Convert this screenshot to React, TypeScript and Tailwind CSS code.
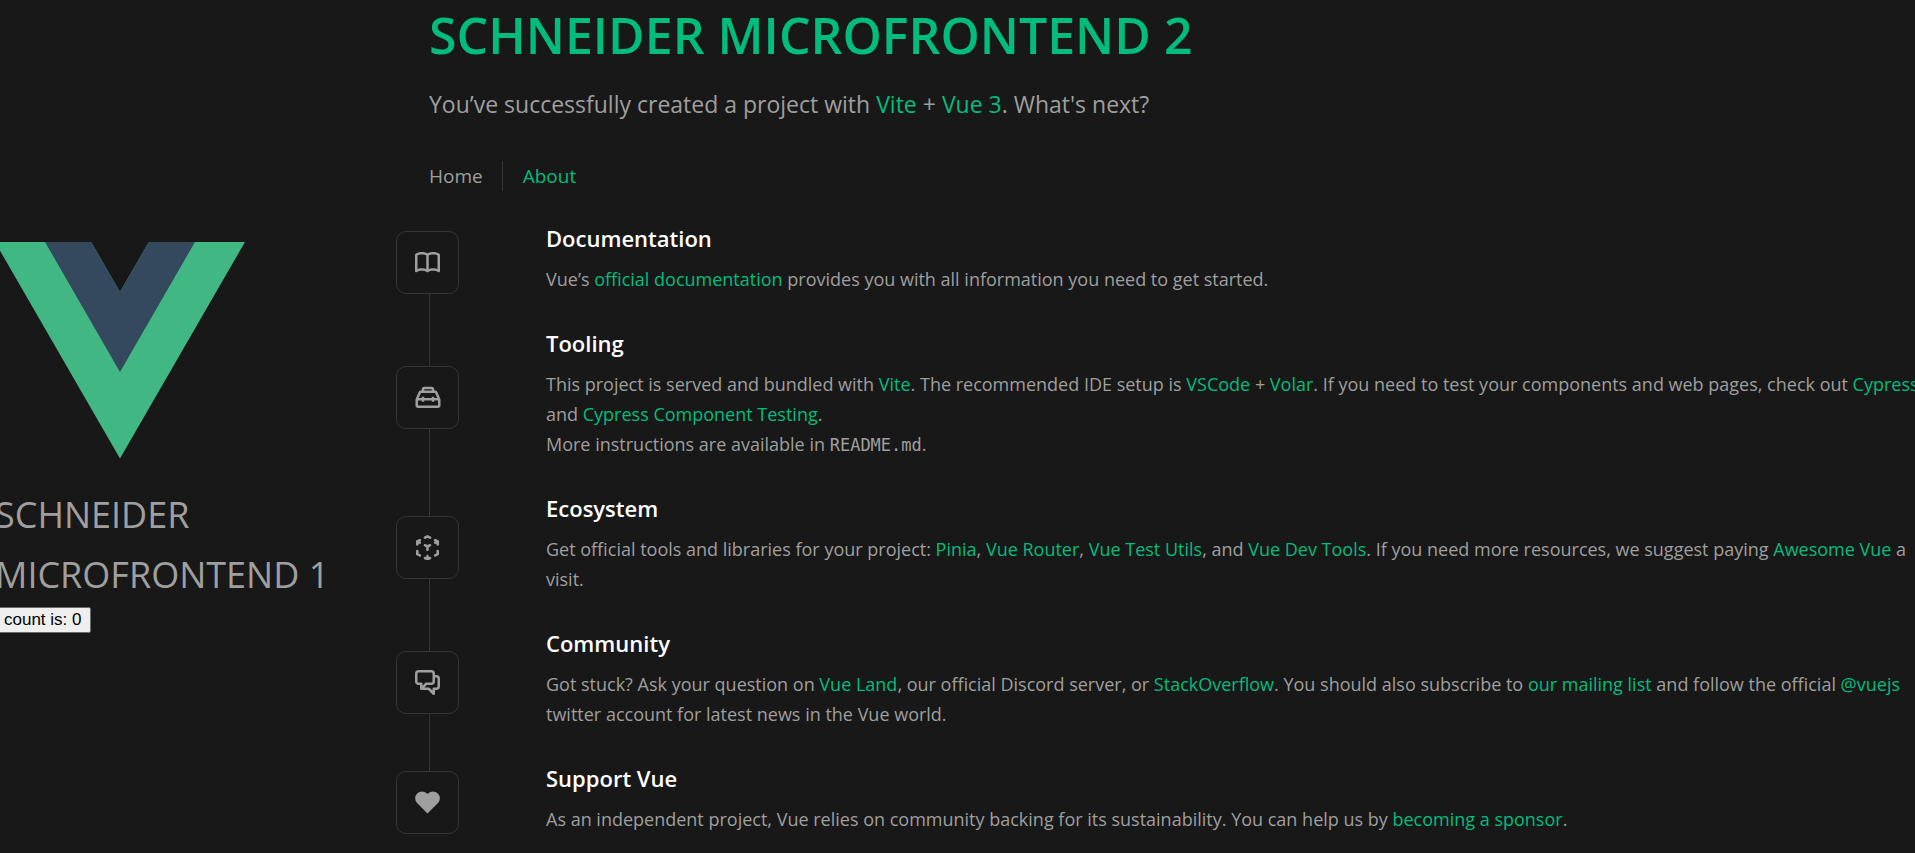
import { useState, type ReactNode } from "react";

function Link({ children }: { children: ReactNode }) {
  return (
    <a href="#" className="text-[#00bd7e] transition-colors hover:bg-[#00bd7e]/20">
      {children}
    </a>
  );
}

function VueLogo() {
  return (
    <svg viewBox="0 0 261.76 226.69" className="w-[250px]" aria-hidden="true">
      <path
        d="M161.096.001l-30.225 52.351L100.647.001H-.005l130.877 226.688L261.749.001z"
        fill="#41b883"
      />
      <path
        d="M161.096.001l-30.225 52.351L100.647.001H52.346l78.526 136.01L209.398.001z"
        fill="#34495e"
      />
    </svg>
  );
}

function DocumentationIcon() {
  return (
    <svg viewBox="0 0 20 17" className="w-[25px]" fill="currentColor" aria-hidden="true">
      <path d="M11 2.253a1 1 0 1 0-2 0h2zm-2 13a1 1 0 1 0 2 0H9zm.447-12.167a1 1 0 1 0 1.107-1.666L9.447 3.086zM1 2.253L.447 1.42A1 1 0 0 0 0 2.253h1zm0 13H0a1 1 0 0 0 1.553.833L1 15.253zm8.447.833a1 1 0 1 0 1.107-1.666l-1.107 1.666zm0-14.666a1 1 0 1 0 1.107 1.666L9.447 1.42zM19 2.253h1a1 1 0 0 0-.447-.833L19 2.253zm0 13l-.553.833A1 1 0 0 0 20 15.253h-1zm-9.553-.833a1 1 0 1 0 1.107 1.666L9.447 14.42zM9 2.253v13h2v-13H9zm1.553-.833C9.203.523 7.42 0 5.5 0v2c1.572 0 2.961.431 3.947 1.086l1.107-1.666zM5.5 0C3.58 0 1.797.523.447 1.42l1.107 1.666C2.539 2.431 3.928 2 5.5 2V0zM0 2.253v13h2v-13H0zm1.553 13.833C2.539 15.431 3.928 15 5.5 15v-2c-1.92 0-3.703.523-5.053 1.42l1.107 1.666zM5.5 15c1.572 0 2.961.431 3.947 1.086l1.107-1.666C9.203 13.523 7.42 13 5.5 13v2zm5.053-11.914C11.539 2.431 12.928 2 14.5 2V0c-1.92 0-3.703.523-5.053 1.42l1.107 1.666zM14.5 2c1.573 0 2.961.431 3.947 1.086l1.107-1.666C18.203.523 16.421 0 14.5 0v2zm3.5.253v13h2v-13h-2zm1.553 12.167C18.203 13.523 16.421 13 14.5 13v2c1.573 0 2.961.431 3.947 1.086l1.107-1.666zM14.5 13c-1.92 0-3.703.523-5.053 1.42l1.107 1.666C11.539 15.431 12.928 15 14.5 15v-2z" />
    </svg>
  );
}

function ToolingIcon() {
  return (
    <svg viewBox="0 0 24 24" className="w-[30px]" fill="currentColor" aria-hidden="true">
      <path d="M20 18v-4h-3v1h-2v-1H9v1H7v-1H4v4h16M6.33 8l-1.74 4H7v-1h2v1h6v-1h2v1h2.41l-1.74-4H6.33M9 5v1h6V5H9m12.84 7.61c.1.22.16.48.16.8V18c0 .53-.21 1-.6 1.41-.4.4-.85.59-1.4.59H4c-.55 0-1-.19-1.4-.59C2.21 19 2 18.53 2 18v-4.59c0-.32.06-.58.16-.8L4.5 7.22C4.84 6.41 5.45 6 6.33 6H7V5c0-.55.18-1 .57-1.41C7.96 3.2 8.44 3 9 3h6c.56 0 1.04.2 1.43.59.39.41.57.86.57 1.41v1h.67c.88 0 1.49.41 1.83 1.22l2.34 5.39z" />
    </svg>
  );
}

function EcosystemIcon() {
  return (
    <svg viewBox="0 0 18 20" className="w-[23px]" fill="currentColor" aria-hidden="true">
      <path d="M11.447 8.894a1 1 0 1 0-.894-1.789l.894 1.789zm-2.894-.789a1 1 0 1 0 .894 1.789l-.894-1.789zm0 1.789a1 1 0 1 0 .894-1.789l-.894 1.789zM7.447 7.106a1 1 0 1 0-.894 1.789l.894-1.789zM10 9a1 1 0 1 0-2 0h2zm-2 2.5a1 1 0 1 0 2 0H8zm9.447-5.606a1 1 0 1 0-.894-1.789l.894 1.789zm-2.894-.789a1 1 0 1 0 .894 1.789l-.894-1.789zm2 .789a1 1 0 1 0 .894-1.789l-.894 1.789zm-1.106-2.789a1 1 0 1 0-.894 1.789l.894-1.789zM18 5a1 1 0 1 0-2 0h2zm-2 2.5a1 1 0 1 0 2 0h-2zm-5.447-4.606a1 1 0 1 0 .894-1.789l-.894 1.789zM9 1l.447-.894a1 1 0 0 0-.894 0L9 1zm-2.447.106a1 1 0 1 0 .894 1.789l-.894-1.789zm-6 3a1 1 0 1 0 .894 1.789L.553 4.106zm2.894.789a1 1 0 1 0-.894-1.789l.894 1.789zm-2-.789a1 1 0 1 0-.894 1.789l.894-1.789zm1.106 2.789a1 1 0 1 0 .894-1.789l-.894 1.789zM2 5a1 1 0 1 0-2 0h2zM0 7.5a1 1 0 1 0 2 0H0zm8.553 12.394a1 1 0 1 0 .894-1.789l-.894 1.789zm-1.106-2.789a1 1 0 1 0-.894 1.789l.894-1.789zm1.106 1a1 1 0 1 0 .894 1.789l-.894-1.789zm2.894.789a1 1 0 1 0-.894-1.789l.894 1.789zM8 19a1 1 0 1 0 2 0H8zm2-2.5a1 1 0 1 0-2 0h2zm-7.447.394a1 1 0 1 0 .894-1.789l-.894 1.789zM1 15H0a1 1 0 0 0 .553.894L1 15zm1-2.5a1 1 0 1 0-2 0h2zm12.553 2.606a1 1 0 1 0 .894 1.789l-.894-1.789zM17 15l.447.894A1 1 0 0 0 18 15h-1zm1-2.5a1 1 0 1 0-2 0h2zm-7.447-5.394l-2 1 .894 1.789 2-1-.894-1.789zm-1.106 1l-2-1-.894 1.789 2 1 .894-1.789zM8 9v2.5h2V9H8zm8.553-4.894l-2 1 .894 1.789 2-1-.894-1.789zm.894 0l-2-1-.894 1.789 2 1 .894-1.789zM16 5v2.5h2V5h-2zm-4.553-3.894l-2-1-.894 1.789 2 1 .894-1.789zm-2.894-1l-2 1 .894 1.789 2-1L8.553.106zM1.447 5.894l2-1-.894-1.789-2 1 .894 1.789zm-.894 0l2 1 .894-1.789-2-1-.894 1.789zM0 5v2.5h2V5H0zm9.447 13.106l-2-1-.894 1.789 2 1 .894-1.789zm0 1.789l2-1-.894-1.789-2 1 .894 1.789zM10 19v-2.5H8V19h2zm-6.553-3.894l-2-1-.894 1.789 2 1 .894-1.789zM2 15v-2.5H0V15h2zm13.447 1.894l2-1-.894-1.789-2 1 .894 1.789zM18 15v-2.5h-2V15h2z" />
    </svg>
  );
}

function CommunityIcon() {
  return (
    <svg viewBox="0 0 20 20" className="w-[25px]" fill="currentColor" aria-hidden="true">
      <path d="M15 4a1 1 0 1 0 0 2V4zm0 11v-1a1 1 0 0 0-1 1h1zm0 4l-.707.707A1 1 0 0 0 16 19h-1zm-4-4l.707-.707A1 1 0 0 0 11 14v1zm-4.707-1.293a1 1 0 0 0-1.414 1.414l1.414-1.414zm-.707.707l-.707-.707.707.707zM9 11v-1a1 1 0 0 0-.707.293L9 11zm-4 0h1a1 1 0 0 0-1-1v1zm0 4H4a1 1 0 0 0 1.707.707L5 15zm10-9h2V4h-2v2zm2 0a1 1 0 0 1 1 1h2a3 3 0 0 0-3-3v2zm1 1v6h2V7h-2zm0 6a1 1 0 0 1-1 1v2a3 3 0 0 0 3-3h-2zm-1 1h-2v2h2v-2zm-3 1v4h2v-4h-2zm1.707 3.293l-4-4-1.414 1.414 4 4 1.414-1.414zM11 14H7v2h4v-2zm-4 0c-.276 0-.525-.111-.707-.293l-1.414 1.414C5.42 15.663 6.172 16 7 16v-2zm-.707 1.121l3.414-3.414-1.414-1.414-3.414 3.414 1.414 1.414zM9 12h4v-2H9v2zm4 0a3 3 0 0 0 3-3h-2a1 1 0 0 1-1 1v2zm3-3V3h-2v6h2zm0-6a3 3 0 0 0-3-3v2a1 1 0 0 1 1 1h2zm-3-3H3v2h10V0zM3 0a3 3 0 0 0-3 3h2a1 1 0 0 1 1-1V0zM0 3v6h2V3H0zm0 6a3 3 0 0 0 3 3v-2a1 1 0 0 1-1-1H0zm3 3h2v-2H3v2zm1-1v4h2v-4H4zm1.707 4.707l.586-.586-1.414-1.414-.586.586 1.414 1.414z" />
    </svg>
  );
}

function SupportIcon() {
  return (
    <svg viewBox="0 0 20 20" className="w-[25px]" fill="currentColor" aria-hidden="true">
      <path d="M10 3.22l-.61-.6a5.5 5.5 0 0 0-7.666.105 5.5 5.5 0 0 0-.114 7.665L10 18.78l8.39-8.4a5.5 5.5 0 0 0-.114-7.665 5.5 5.5 0 0 0-7.666-.105l-.61.61z" />
    </svg>
  );
}

type ItemProps = {
  icon: ReactNode;
  title: string;
  first?: boolean;
  last?: boolean;
  children: ReactNode;
};

function WelcomeItem({ icon, title, first, last, children }: ItemProps) {
  return (
    <li className="flex">
      <div className="flex w-[63px] shrink-0 flex-col items-center">
        <span className={`ml-[3px] w-px flex-1 ${first ? "" : "bg-[#353535]"}`} />
        <i className="flex size-[63px] shrink-0 items-center justify-center rounded-[10px] border border-[#353535]">
          {icon}
        </i>
        <span className={`ml-[3px] w-px flex-1 ${last ? "" : "bg-[#353535]"}`} />
      </div>
      <div className="ml-[87px] flex-1 pt-[14px] pb-[21px]">
        <h3 className="mb-[11px] text-[22px] leading-[29px] font-semibold text-white">{title}</h3>
        <p className="text-[18px] leading-[30px]">{children}</p>
      </div>
    </li>
  );
}

export default function App() {
  const [count, setCount] = useState(0);

  return (
    <div className="flex min-h-screen overflow-hidden bg-[#181818] font-['Open_Sans','Noto_Sans',sans-serif] text-[#9f9f9f]">
      <aside className="-ml-[5px] w-[401px] shrink-0 pt-[242px]">
        <VueLogo />
        <h1 className="mt-[26px] w-[350px] text-[36px] leading-[60px]">SCHNEIDER MICROFRONTEND 1</h1>
        <button
          type="button"
          onClick={() => setCount(count + 1)}
          className="mt-[2px] block rounded-[2px] border border-[#6b6b6b] bg-[#efefef] px-2 font-['Liberation_Sans',Arial,sans-serif] text-[17px] leading-[24px] text-black"
        >
          count is: {count}
        </button>
      </aside>

      <main className="-mr-2 min-w-0 flex-1">
        <header className="pl-[33px]">
          <h1 className="text-[50px] leading-[70px] font-semibold text-[#00bd7e]">
            SCHNEIDER MICROFRONTEND 2
          </h1>
          <h2 className="mt-[15px] text-[23px] leading-[38px]">
            You’ve successfully created a project with <Link>Vite</Link> + <Link>Vue 3</Link>. What's
            next?
          </h2>
          <nav className="mt-[38px] flex text-[19px] leading-[30px]">
            <a href="#" className="pr-[19px]">
              Home
            </a>
            <a href="#" className="border-l border-[#353535] pl-5 text-[#00bd7e]">
              About
            </a>
          </nav>
        </header>

        <ul className="mt-[19px]">
          <WelcomeItem icon={<DocumentationIcon />} title="Documentation" first>
            Vue’s <Link>official documentation</Link> provides you with all information you need to
            get started.
          </WelcomeItem>
          <WelcomeItem icon={<ToolingIcon />} title="Tooling">
            This project is served and bundled with <Link>Vite</Link>. The recommended IDE setup is{" "}
            <Link>VSCode</Link> + <Link>Volar</Link>. If you need to test your components and web
            pages, check out <Link>Cypress</Link> and <Link>Cypress Component Testing</Link>.
            <br />
            More instructions are available in{" "}
            <code className="font-['DejaVu_Sans_Mono',monospace] text-[17px] leading-5">README.md</code>.
          </WelcomeItem>
          <WelcomeItem icon={<EcosystemIcon />} title="Ecosystem">
            Get official tools and libraries for your project: <Link>Pinia</Link>,{" "}
            <Link>Vue Router</Link>, <Link>Vue Test Utils</Link>, and <Link>Vue Dev Tools</Link>. If
            you need more resources, we suggest paying <Link>Awesome Vue</Link> a visit.
          </WelcomeItem>
          <WelcomeItem icon={<CommunityIcon />} title="Community">
            Got stuck? Ask your question on <Link>Vue Land</Link>, our official Discord server, or{" "}
            <Link>StackOverflow</Link>. You should also subscribe to <Link>our mailing list</Link>{" "}
            and follow the official <Link>@vuejs</Link> twitter account for latest news in the Vue
            world.
          </WelcomeItem>
          <WelcomeItem icon={<SupportIcon />} title="Support Vue" last>
            As an independent project, Vue relies on community backing for its sustainability. You
            can help us by <Link>becoming a sponsor</Link>.
          </WelcomeItem>
        </ul>
      </main>
    </div>
  );
}
